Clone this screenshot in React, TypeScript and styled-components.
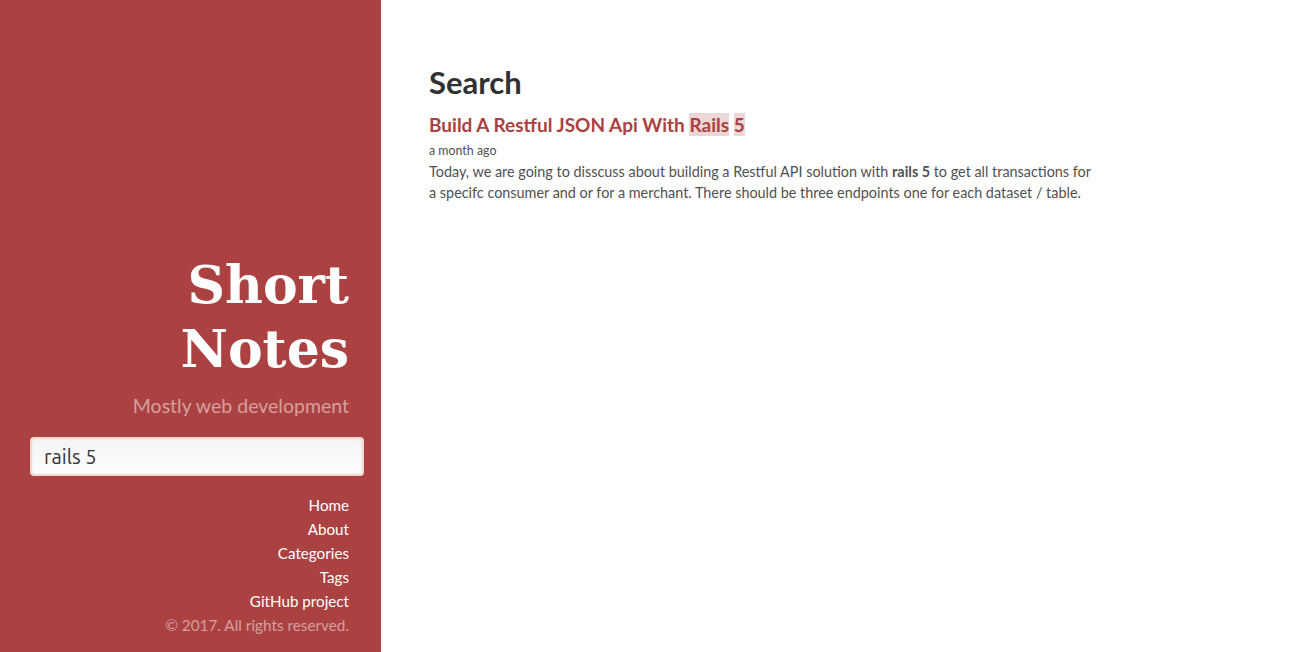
import React from "react";
import styled, { createGlobalStyle } from "styled-components";

const Global = createGlobalStyle`
  html, body { margin: 0; padding: 0; height: 100%; }
  body { font-family: Lato, "Noto Sans", sans-serif; color: #515151; background: #fff; }
  #root { height: 100%; }
`;

const Page = styled.div`
  display: flex;
  height: 652px;
`;

const Sidebar = styled.aside`
  width: 381px;
  flex: none;
  background: #ac4142;
  display: flex;
  flex-direction: column;
  justify-content: flex-end;
  align-items: stretch;
  box-sizing: border-box;
  padding: 0 32px 15px 30px;
  text-align: right;
`;

const Brand = styled.h1`
  margin: 0;
  font-family: "DejaVu Serif", serif;
  font-weight: bold;
  font-size: 52px;
  line-height: 64px;
  color: #fff;
`;

const Tagline = styled.p`
  margin: 11px 0 17px;
  font-size: 19.5px;
  line-height: 28px;
  color: rgba(255, 255, 255, 0.5);
`;

const SearchInput = styled.input`
  display: block;
  box-sizing: border-box;
  height: 39px;
  margin: 0 -15px 0 0;
  width: calc(100% + 15px);
  padding: 0 12px;
  font-family: Ubuntu, "Noto Sans", sans-serif;
  font-size: 20px;
  color: #333;
  background: linear-gradient(#f4f4f4, #fdfdfd);
  border: 2px solid #f3d9cf;
  border-radius: 4px;
  box-shadow: inset 0 0 3px rgba(0, 0, 0, 0.08);
  outline: none;
`;

const Nav = styled.nav`
  display: flex;
  flex-direction: column;
  margin-top: 17px;
`;

const NavLink = styled.a`
  font-size: 15.2px;
  line-height: 24px;
  color: #fff;
  text-decoration: none;
`;

const Copyright = styled.p`
  margin: 0;
  font-size: 15.3px;
  line-height: 24px;
  color: rgba(255, 255, 255, 0.5);
`;

const Main = styled.main`
  flex: 1;
  padding: 62px 48px 0 48px;
`;

const Container = styled.div`
  max-width: 668px;
`;

const PageTitle = styled.h1`
  margin: 0 0 8px;
  font-size: 31px;
  line-height: 40px;
  font-weight: bold;
  color: #313131;
`;

const PostTitle = styled.a`
  display: block;
  font-size: 19px;
  line-height: 30px;
  font-weight: bold;
  color: #ac4142;
  text-decoration: none;
`;

const Mark = styled.mark`
  background: #ebd7d7;
  color: inherit;
`;

const PostDate = styled.div`
  margin-top: 2px;
  font-size: 12.4px;
  line-height: 18px;
  color: #515151;
`;

const Excerpt = styled.p`
  margin: 1px 0 0;
  font-size: 14.4px;
  line-height: 21px;
  color: #515151;
`;

export default function App() {
  return (
    <Page>
      <Global />
      <Sidebar>
        <Brand>
          Short
          <br />
          Notes
        </Brand>
        <Tagline>Mostly web development</Tagline>
        <SearchInput defaultValue="rails 5" />
        <Nav>
          <NavLink href="#">Home</NavLink>
          <NavLink href="#">About</NavLink>
          <NavLink href="#">Categories</NavLink>
          <NavLink href="#">Tags</NavLink>
          <NavLink href="#">GitHub project</NavLink>
        </Nav>
        <Copyright>© 2017. All rights reserved.</Copyright>
      </Sidebar>
      <Main>
        <Container>
          <PageTitle>Search</PageTitle>
          <PostTitle href="#">
            Build A Restful JSON Api With <Mark>Rails</Mark> <Mark>5</Mark>
          </PostTitle>
          <PostDate>a month ago</PostDate>
          <Excerpt>
            Today, we are going to disscuss about building a Restful API solution with <b>rails 5</b> to get all
            transactions for a specifc consumer and or for a merchant. There should be three endpoints one for each
            dataset / table.
          </Excerpt>
        </Container>
      </Main>
    </Page>
  );
}
